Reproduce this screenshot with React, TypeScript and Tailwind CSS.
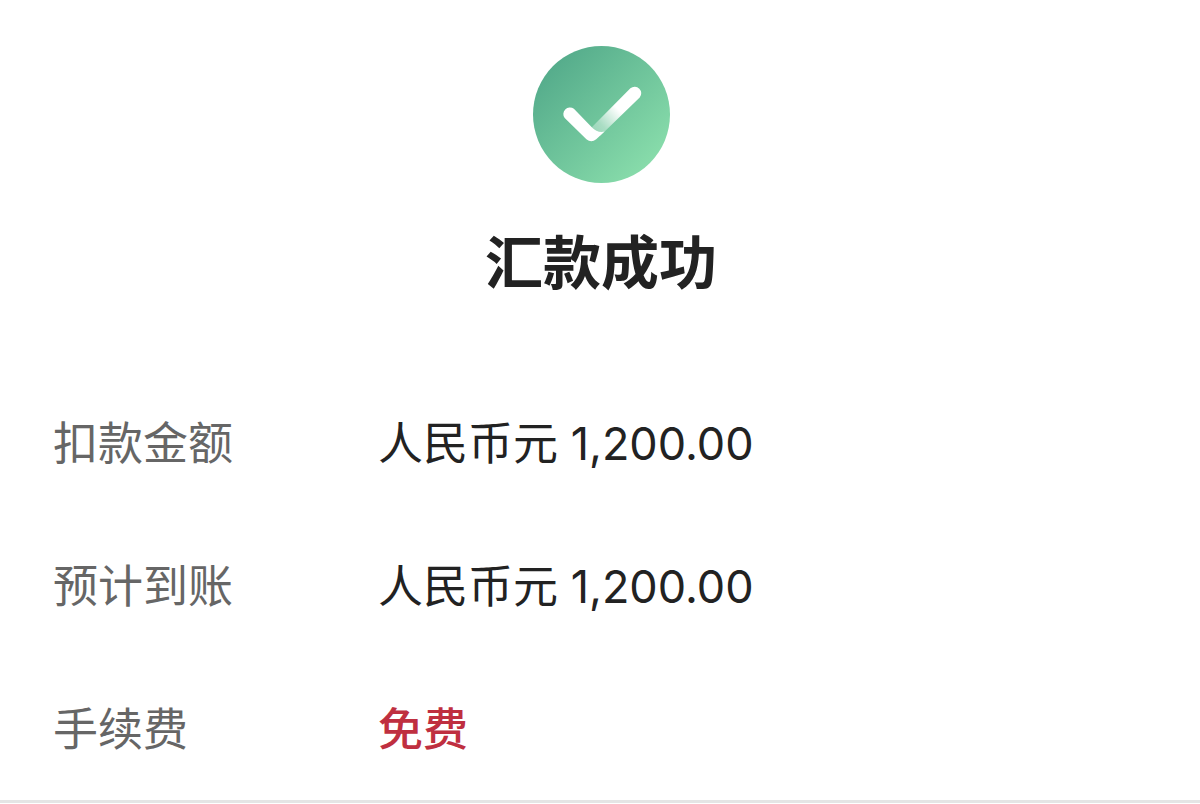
import { clsx } from "clsx";

const details = [
   { label: "扣款金额", value: "人民币元 1,200.00" },
   { label: "预计到账", value: "人民币元 1,200.00" },
   { label: "手续费", value: "免费", highlight: true },
];

function SuccessIcon() {
   return (
      <svg viewBox="0 0 137 137" className="size-[137px]" aria-hidden="true">
         <defs>
            <linearGradient id="disc" x1="0.15" y1="0.15" x2="0.85" y2="0.85">
               <stop offset="0" stopColor="#56ad8c" />
               <stop offset="1" stopColor="#87dbaa" />
            </linearGradient>
            <linearGradient
               id="tail"
               gradientUnits="userSpaceOnUse"
               x1="62"
               y1="86"
               x2="85"
               y2="63"
            >
               <stop offset="0" stopColor="#fff" stopOpacity="0.3" />
               <stop offset="0.3" stopColor="#fff" stopOpacity="0.4" />
               <stop offset="1" stopColor="#fff" />
            </linearGradient>
         </defs>
         <circle cx="68.5" cy="68.5" r="68.5" fill="url(#disc)" />
         <path
            d="M58.8 81.2 97.4 42.3A6.6 6.6 0 0 1 106.7 51.6L67 90Z"
            fill="url(#tail)"
         />
         <path
            d="M40.9 62.8 58.8 81.2C62.4 85 66.5 86.6 71.6 85.6L63.2 93.2Q58.3 97.2 53.4 93.2L31.7 72.1A6.6 6.6 0 0 1 40.9 62.8Z"
            fill="#fff"
         />
      </svg>
   );
}

export default function App() {
   return (
      <main className="border-b-3 border-[#e5e5e5] bg-white pt-[46px] font-[Inter,'Noto_Sans_CJK_SC',sans-serif] text-[#222]">
         <div className="flex flex-col items-center gap-10 pl-0.5">
            <SuccessIcon />
            <h1 className="text-[58px] leading-20 font-bold">汇款成功</h1>
         </div>

         <dl className="flex flex-col gap-[79px] px-[53px] pt-[109px] pb-[38px] text-[45px] leading-16">
            {details.map(({ label, value, highlight }) => (
               <div key={label} className="flex">
                  <dt className="w-[325px] shrink-0 text-[#666]">{label}</dt>
                  <dd className={clsx(highlight && "font-medium text-[#bf2f40]")}>{value}</dd>
               </div>
            ))}
         </dl>
      </main>
   );
}
